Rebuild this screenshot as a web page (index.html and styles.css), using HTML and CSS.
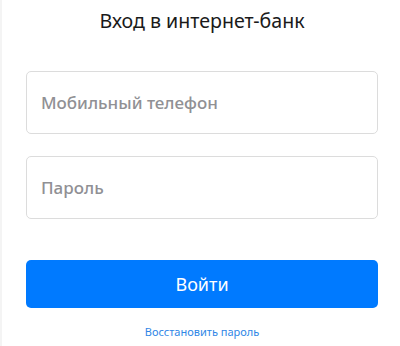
FILE: index.html
```html
<!DOCTYPE html>
<html lang="ru">
<head>
    <meta charset="UTF-8">
    <meta name="viewport" content="width=device-width, initial-scale=1.0">
    <title>Вход в интернет-банк</title>
    <link rel="stylesheet" href="styles.css">
</head>
<body>
    <div class="login">
        <h1 class="title">Вход в интернет-банк</h1>
        <form class="form">
            <input type="tel" class="field" placeholder="Мобильный телефон">
            <input type="password" class="field" placeholder="Пароль">
            <button type="submit" class="submit">Войти</button>
        </form>
        <a href="#" class="restore">Восстановить пароль</a>
    </div>
</body>
</html>
```

FILE: styles.css
```css
body {
    font-family: "Noto Sans", Arial, sans-serif;
    margin: 0;
    background: #fff;
}
.login {
    border-left: 2px solid #f4f4f4;
    height: 346px;
    box-sizing: border-box;
    padding: 0 22px 0 24px;
    display: flex;
    flex-direction: column;
}
.title {
    margin: 0;
    height: 42px;
    line-height: 42px;
    text-align: center;
    font-size: 19.6px;
    font-weight: 400;
    color: #1a1a1a;
}
.form {
    margin-top: 29px;
    display: flex;
    flex-direction: column;
}
.field {
    height: 63px;
    box-sizing: border-box;
    margin-bottom: 22px;
    padding: 0 14px;
    border: 1px solid #dcdcdc;
    border-radius: 5px;
    font-family: inherit;
    font-size: 17px;
    font-weight: 500;
    color: #222;
    outline: none;
}
.field::placeholder {
    color: #909094;
}
.field + .field {
    margin-bottom: 41px;
}
.submit {
    height: 48px;
    border: none;
    border-radius: 5px;
    background-color: #007aff;
    color: #fff;
    font-family: inherit;
    font-size: 18px;
    cursor: pointer;
}
.restore {
    margin-top: 16px;
    text-align: center;
    font-size: 11px;
    color: #2f86e6;
    text-decoration: none;
}
```
